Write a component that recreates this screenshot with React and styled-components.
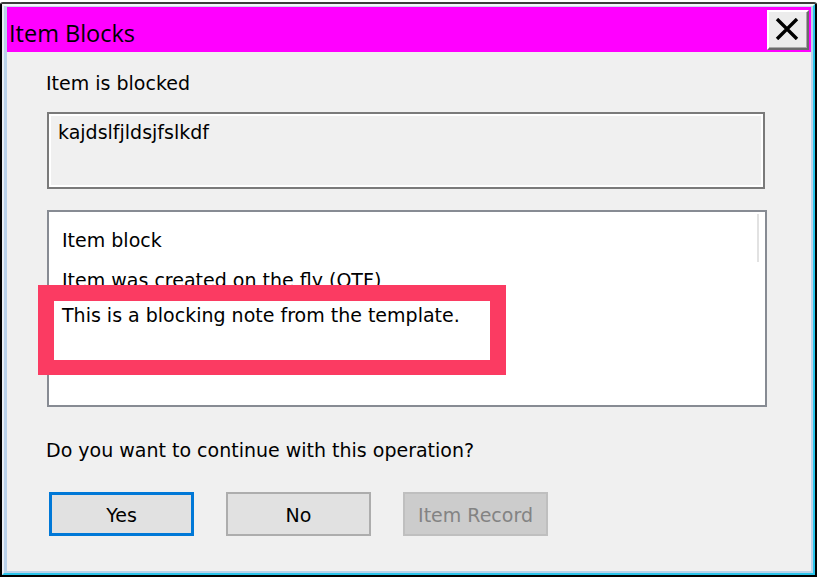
import React from 'react';
import styled, {createGlobalStyle} from "styled-components";

const GlobalStyle = createGlobalStyle`
  html, body {
    margin: 0;
    padding: 0;
    background: #ffffff;
  }
  body {
    font-family: "DejaVu Sans", "Liberation Sans", sans-serif;
    overflow: hidden;
  }
`;

const Window = styled.div`
  box-sizing: border-box;
  width: 817px;
  height: 575px;
  margin-top: 2px;
  border: 2px solid #000;
  border-top-color: #3c3c3c;
  border-radius: 3px 3px 0 0;
  display: flex;
`;

const Shell = styled.div`
  flex: 1;
  display: flex;
  border: 2px solid;
  border-color: #f3f6fa #2ac4ea #2ac4ea #e9eef5;
`;

const Frame = styled.div`
  flex: 1;
  display: flex;
  flex-direction: column;
  background: #f0f0f0;
  border-style: solid;
  border-color: #c9d9ec #b9d1ea #b9d1ea #b9d1ea;
  border-width: 1px 2px 2px 3px;
`;

const TitleBar = styled.div`
  height: 45px;
  flex-shrink: 0;
  background: #ff00ff;
  display: flex;
  align-items: flex-start;
  justify-content: space-between;
  padding-left: 2px;
`;

const Title = styled.div`
  font-family: "Open Sans", "Noto Sans", sans-serif;
  font-size: 23.5px;
  line-height: 45px;
  color: #000;
  margin-top: 4px;
`;

const CloseBtn = styled.div`
  box-sizing: border-box;
  width: 42px;
  height: 40px;
  margin: 3px 2px 0 0;
  background: #ececec;
  border: 2px solid;
  border-color: #ffffff #6b6b6b #6b6b6b #ffffff;
  box-shadow: inset -1px -1px 0 #a9a9a9;
  display: flex;
  align-items: center;
  justify-content: center;
  padding-right: 3px;
  padding-bottom: 2px;
`;

const Body = styled.div`
  display: flex;
  flex-direction: column;
  align-items: flex-start;
  padding-left: 39px;
  font-size: 19px;
  line-height: 22px;
  color: #000;
`;

const Label = styled.div`
  margin-top: ${p => p.$top}px;
  white-space: nowrap;
`;

const ReadBox = styled.div`
  box-sizing: border-box;
  width: 718px;
  height: 77px;
  margin: 18px 0 0 1px;
  border: 2px solid #7a7a7a;
  box-shadow: inset -2px -2px 0 #ffffff, inset 2px 2px 0 #ffffff;
  padding: 7px 9px;
  background: #f0f0f0;
`;

const ListWrap = styled.div`
  position: relative;
  margin: 21px 0 0 1px;
`;

const ListBox = styled.div`
  box-sizing: border-box;
  width: 720px;
  height: 197px;
  border: 2px solid #878b93;
  background: #fff;
  padding: 9px 13px 0;
  overflow: hidden;
`;

const ListItem = styled.div`
  height: ${p => p.$h}px;
  line-height: 38px;
  white-space: nowrap;
`;

const ScrollThumb = styled.div`
  position: absolute;
  left: 710px;
  top: 4px;
  width: 2px;
  height: 48px;
  background: #e2e2e2;
`;

const Highlight = styled.div`
  position: absolute;
  box-sizing: border-box;
  left: -9px;
  top: 75px;
  width: 468px;
  height: 90px;
  border: 16px solid #fb3b62;
  border-bottom-width: 15px;
  pointer-events: none;
`;

const ButtonRow = styled.div`
  display: flex;
  gap: 32px;
  margin: 31px 0 0 3px;
`;

const Button = styled.div`
  box-sizing: border-box;
  width: 145px;
  height: 44px;
  display: flex;
  align-items: center;
  justify-content: center;
  background: ${p => p.$disabled ? '#cccccc' : '#e1e1e1'};
  border: ${p => p.$default ? '3px solid #0078d7' : `2px solid ${p.$disabled ? '#bfbfbf' : '#adadad'}`};
  color: ${p => p.$disabled ? '#838383' : '#000'};
  padding-top: 1px;
`;

const App = () => {
    const items = [
        {text: 'Item block', h: 40},
        {text: 'Item was created on the fly (OTF)', h: 35},
        {text: 'This is a blocking note from the template.', h: 38}
    ];
    return (
        <>
            <GlobalStyle/>
            <Window>
                <Shell>
                    <Frame>
                        <TitleBar>
                            <Title>Item Blocks</Title>
                            <CloseBtn>
                                <svg width="24" height="22" viewBox="0 0 24 22">
                                    <path d="M2 1 L22 21 M22 1 L2 21" stroke="#000" strokeWidth="3.4" fill="none"/>
                                </svg>
                            </CloseBtn>
                        </TitleBar>
                        <Body>
                            <Label $top={20}>Item is blocked</Label>
                            <ReadBox>kajdslfjldsjfslkdf</ReadBox>
                            <ListWrap>
                                <ListBox>
                                    {items.map(({text, h}, index) => <ListItem key={index} $h={h}>{text}</ListItem>)}
                                </ListBox>
                                <ScrollThumb/>
                                <Highlight/>
                            </ListWrap>
                            <Label $top={32}>Do you want to continue with this operation?</Label>
                            <ButtonRow>
                                <Button $default>Yes</Button>
                                <Button>No</Button>
                                <Button $disabled>Item Record</Button>
                            </ButtonRow>
                        </Body>
                    </Frame>
                </Shell>
            </Window>
        </>
    );
};

export default App;
